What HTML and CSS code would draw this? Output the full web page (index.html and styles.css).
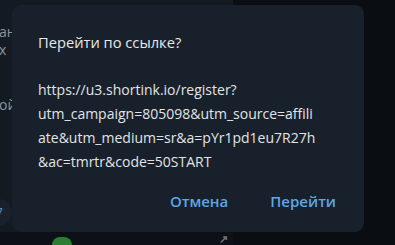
FILE: index.html
```html
<!DOCTYPE html>
<html lang="ru">
<head>
<meta charset="utf-8">
<link rel="stylesheet" href="styles.css">
</head>
<body>
<div class="app">
  <div class="chat">
    <div class="feed">
      <div class="line l1">ан</div>
      <div class="line l2">х</div>
      <div class="line l3">ой</div>
    </div>
    <div class="bottom">
      <span class="green"></span>
      <span class="arrow">↗</span>
    </div>
    <div class="badge">7</div>
  </div>
  <div class="side"></div>
  <div class="dialog">
    <div class="title">Перейти по ссылке?</div>
    <div class="url">https://u3.shortink.io/register?<br>utm_campaign=805098&amp;utm_source=affili<br>ate&amp;utm_medium=sr&amp;a=pYr1pd1eu7R27h<br>&amp;ac=tmrtr&amp;code=50START</div>
    <div class="actions">
      <span class="btn">Отмена</span>
      <span class="btn">Перейти</span>
    </div>
  </div>
</div>
</body>
</html>
```
FILE: styles.css
```css
html, body {
  margin: 0;
  padding: 0;
  width: 395px;
  height: 245px;
  overflow: hidden;
  background: #0a0d12;
  font-family: "Open Sans", "Noto Sans", sans-serif;
}
.app {
  position: relative;
  display: flex;
  width: 395px;
  height: 245px;
}
.chat {
  position: relative;
  width: 233px;
  display: flex;
  flex-direction: column;
  background: #131a22;
}
.feed {
  flex: 1;
  padding-top: 23px;
  overflow: hidden;
}
.line {
  color: #8f959b;
  font-size: 14px;
  line-height: 18px;
  margin-left: -1px;
  white-space: nowrap;
}
.l3 { margin-top: 37px; }
.bottom {
  height: 13px;
  background: #0d1117;
  position: relative;
}
.green {
  position: absolute;
  left: 52px;
  top: 5px;
  width: 20px;
  height: 8px;
  border-radius: 8px 8px 0 0;
  background: #2a7d33;
}
.arrow {
  position: absolute;
  left: 219px;
  top: 1px;
  color: #6d7378;
  font-size: 11px;
  line-height: 11px;
  font-weight: 700;
}
.badge {
  position: absolute;
  left: -15px;
  top: 199px;
  width: 27px;
  height: 27px;
  border-radius: 50%;
  background: #19222c;
  color: #4d86bd;
  font-size: 14px;
  line-height: 27px;
  text-align: right;
  box-sizing: border-box;
  padding-right: 9px;
}
.side {
  flex: 1;
  background: #0a0d12;
}
.dialog {
  position: absolute;
  left: 12px;
  top: 5px;
  width: 352px;
  height: 227px;
  box-sizing: border-box;
  border-radius: 9px;
  background: #18212b;
  padding: 27px 26px 0 26px;
  display: flex;
  flex-direction: column;
}
.title {
  color: #e6e8ea;
  font-size: 14.7px;
  line-height: 20px;
}
.url {
  margin-top: 26px;
  color: #e2e4e6;
  font-size: 14px;
  line-height: 24px;
  white-space: nowrap;
}
.actions {
  margin-top: 15px;
  display: flex;
  justify-content: flex-end;
  gap: 42px;
  padding-right: 2px;
}
.btn {
  color: #5ea6e4;
  font-size: 15px;
  font-weight: 600;
  line-height: 24px;
}
```
